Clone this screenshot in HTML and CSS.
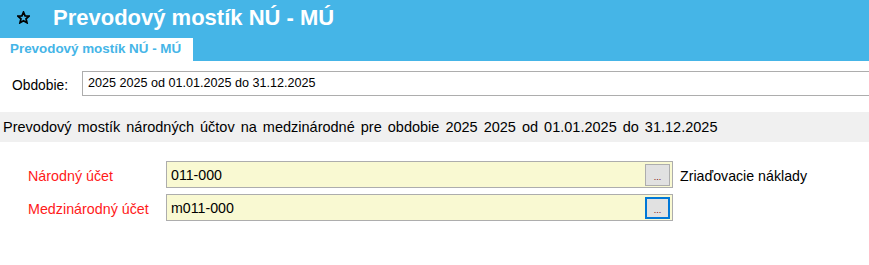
FILE: index.html
```html
<!DOCTYPE html>
<html lang="sk">
<head>
<meta charset="utf-8">
<title>Prevodový mostík NÚ - MÚ</title>
<link rel="stylesheet" href="styles.css">
</head>
<body>
<header class="header">
  <svg class="star" width="13" height="13" viewBox="0 0 24 24" aria-hidden="true">
    <polygon points="12,2 14.9,8.9 22.3,9.5 16.7,14.4 18.4,21.6 12,17.8 5.6,21.6 7.3,14.4 1.7,9.5 9.1,8.9" fill="none" stroke="#000" stroke-width="3.2" stroke-linejoin="miter"/>
  </svg>
  <h1 class="title">Prevodový mostík NÚ - MÚ</h1>
</header>
<nav class="tabbar">
  <div class="tab">Prevodový mostík NÚ - MÚ</div>
</nav>
<main class="content">
  <div class="period-row">
    <label class="period-label">Obdobie:</label>
    <div class="period-input">2025 2025 od 01.01.2025 do 31.12.2025</div>
  </div>
  <div class="band">Prevodový mostík národných účtov na medzinárodné pre obdobie 2025 2025 od 01.01.2025 do 31.12.2025</div>
  <div class="form">
    <div class="form-row">
      <label class="req-label">Národný účet</label>
      <div class="lookup">
        <span class="lookup-value">011-000</span>
        <button class="dots">...</button>
      </div>
      <span class="desc">Zriaďovacie náklady</span>
    </div>
    <div class="form-row">
      <label class="req-label">Medzinárodný účet</label>
      <div class="lookup">
        <span class="lookup-value">m011-000</span>
        <button class="dots focused">...</button>
      </div>
    </div>
  </div>
</main>
</body>
</html>
```

FILE: styles.css
```css
html, body {
  margin: 0;
  padding: 0;
  background: #fff;
  overflow: hidden;
}
body {
  font-family: "Liberation Sans", Arial, sans-serif;
  color: #000;
  width: 869px;
}
.header {
  height: 38px;
  background: #45b5e7;
  display: flex;
  align-items: center;
  padding-left: 17px;
}
.star {
  display: block;
  margin-top: -3px;
}
.title {
  margin: -2px 0 0 23px;
  font-size: 22px;
  font-weight: bold;
  color: #fff;
  line-height: 38px;
}
.tabbar {
  height: 23px;
  background: #45b5e7;
  display: flex;
}
.tab {
  width: 183px;
  background: #fff;
  color: #45b5e7;
  font-weight: bold;
  font-size: 13.4px;
  line-height: 21px;
  padding-left: 10px;
}
.content {
  padding-top: 10px;
}
.period-row {
  display: flex;
  align-items: center;
  height: 25px;
}
.period-label {
  font-size: 13.8px;
  width: 70px;
  padding-left: 12px;
  padding-top: 4px;
}
.period-input {
  flex: 1;
  margin-right: -10px;
  border: 1px solid #adadad;
  box-sizing: border-box;
  height: 25px;
  font-size: 12.6px;
  line-height: 23px;
  padding-left: 5px;
}
.band {
  margin-top: 16px;
  height: 30px;
  background: #f0f0f0;
  font-size: 14.5px;
  line-height: 30px;
  padding-left: 3px;
  word-spacing: 2px;
  white-space: nowrap;
}
.form {
  padding-top: 19px;
  display: flex;
  flex-direction: column;
  gap: 6px;
}
.form-row {
  display: flex;
  align-items: center;
  height: 27px;
}
.req-label {
  color: #ff1a1a;
  font-size: 14.3px;
  width: 138px;
  padding-left: 28px;
  padding-top: 3px;
}
.lookup {
  width: 507px;
  height: 27px;
  box-sizing: border-box;
  border: 1px solid #adadad;
  background: #f9f9d2;
  display: flex;
  align-items: center;
  justify-content: space-between;
  padding-left: 4px;
  padding-right: 2px;
}
.lookup-value {
  font-size: 14.2px;
  padding-top: 1px;
}
.dots {
  width: 25px;
  height: 22px;
  box-sizing: border-box;
  border: 1px solid #adadad;
  background: #e1e1e1;
  color: #800000;
  font-family: "Liberation Sans", Arial, sans-serif;
  font-size: 9px;
  padding: 4px 0 0 0;
  margin: 0;
  line-height: 12px;
}
.dots.focused {
  border: 2px solid #0078d7;
}
.desc {
  font-size: 14.2px;
  margin-left: 7px;
  padding-top: 2px;
}
```
